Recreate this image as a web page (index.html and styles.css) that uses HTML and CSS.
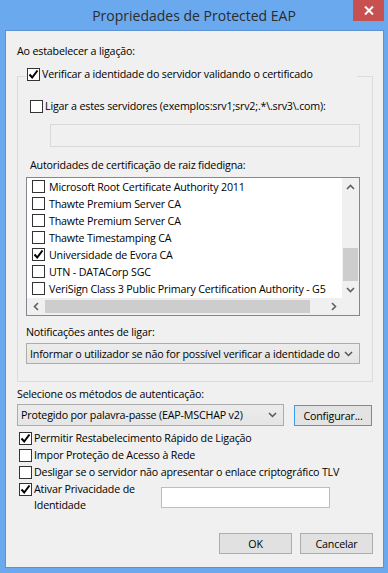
FILE: index.html
```html
<!DOCTYPE html>
<html lang="pt">
<head>
    <meta charset="UTF-8">
    <meta name="viewport" content="width=device-width, initial-scale=1.0">
    <title>Propriedades de Protected EAP</title>
    <link rel="stylesheet" href="styles.css">
</head>
<body>
    <div class="window">
        <div class="titlebar">
            <span class="title">Propriedades de Protected EAP</span>
            <button class="close" type="button">
                <svg width="10" height="9" viewBox="0 0 10 9"><path d="M1 0.5 L9 8.5 M9 0.5 L1 8.5" stroke="#fff" stroke-width="2"/></svg>
            </button>
        </div>

        <div class="client">
            <div class="caption">Ao estabelecer a ligação:</div>

            <fieldset class="group">
                <legend class="legend">
                    <span class="check">
                        <span class="box"><svg width="11" height="11" viewBox="0 0 11 11"><path d="M1.5 5.5 L4.2 8.5 L9.5 1.5" fill="none" stroke="#000" stroke-width="2"/></svg></span>
                        Verificar a identidade do servidor validando o certificado
                    </span>
                </legend>

                <div class="check servers"><span class="box"></span>Ligar a estes servidores (exemplos:srv1;srv2;.*\.srv3\.com):</div>
                <div class="textbox disabled servers-input"></div>

                <div class="caption ca-label">Autoridades de certificação de raiz fidedigna:</div>
                <div class="listview">
                    <div class="list-main">
                        <ul class="items">
                            <li><span class="box"></span>Microsoft Root Certificate Authority 2011</li>
                            <li><span class="box"></span>Thawte Premium Server CA</li>
                            <li><span class="box"></span>Thawte Premium Server CA</li>
                            <li><span class="box"></span>Thawte Timestamping CA</li>
                            <li><span class="box"><svg width="11" height="11" viewBox="0 0 11 11"><path d="M1.5 5.5 L4.2 8.5 L9.5 1.5" fill="none" stroke="#000" stroke-width="2"/></svg></span>Universidade de Evora CA</li>
                            <li><span class="box"></span>UTN - DATACorp SGC</li>
                            <li><span class="box"></span>VeriSign Class 3 Public Primary Certification Authority - G5</li>
                        </ul>
                        <div class="hscroll">
                            <span class="arrow"><svg width="6" height="9" viewBox="0 0 6 9"><path d="M5 1 L1.5 4.5 L5 8" fill="none" stroke="#606060" stroke-width="1.6"/></svg></span>
                            <span class="htrack"><span class="hthumb"></span></span>
                            <span class="arrow"><svg width="6" height="9" viewBox="0 0 6 9"><path d="M1 1 L4.5 4.5 L1 8" fill="none" stroke="#606060" stroke-width="1.6"/></svg></span>
                        </div>
                    </div>
                    <div class="vscroll">
                        <span class="arrow"><svg width="9" height="6" viewBox="0 0 9 6"><path d="M1 5 L4.5 1.5 L8 5" fill="none" stroke="#606060" stroke-width="1.6"/></svg></span>
                        <span class="vtrack"><span class="vthumb"></span></span>
                        <span class="arrow"><svg width="9" height="6" viewBox="0 0 9 6"><path d="M1 1 L4.5 4.5 L8 1" fill="none" stroke="#606060" stroke-width="1.6"/></svg></span>
                        <span class="corner"></span>
                    </div>
                </div>

                <div class="caption notify-label">Notificações antes de ligar:</div>
                <div class="combo notify-combo">
                    <span class="combo-text">Informar o utilizador se não for possível verificar a identidade do</span>
                    <svg width="9" height="6" viewBox="0 0 9 6"><path d="M1 1 L4.5 4.5 L8 1" fill="none" stroke="#555" stroke-width="1.5"/></svg>
                </div>
            </fieldset>

            <div class="caption auth-label">Selecione os métodos de autenticação:</div>
            <div class="auth-row">
                <div class="combo auth-combo">
                    <span class="combo-text">Protegido por palavra-passe (EAP-MSCHAP v2)</span>
                    <svg width="9" height="6" viewBox="0 0 9 6"><path d="M1 1 L4.5 4.5 L8 1" fill="none" stroke="#555" stroke-width="1.5"/></svg>
                </div>
                <button class="btn default" type="button">Configurar...</button>
            </div>

            <div class="options">
                <div class="check opt"><span class="box"><svg width="11" height="11" viewBox="0 0 11 11"><path d="M1.5 5.5 L4.2 8.5 L9.5 1.5" fill="none" stroke="#000" stroke-width="2"/></svg></span>Permitir Restabelecimento Rápido de Ligação</div>
                <div class="check opt"><span class="box"></span>Impor Proteção de Acesso à Rede</div>
                <div class="check opt"><span class="box"></span>Desligar se o servidor não apresentar o enlace criptográfico TLV</div>
                <div class="privacy-row">
                    <div class="check opt top">
                        <span class="box"><svg width="11" height="11" viewBox="0 0 11 11"><path d="M1.5 5.5 L4.2 8.5 L9.5 1.5" fill="none" stroke="#000" stroke-width="2"/></svg></span>
                        <span class="wrap-label">Ativar Privacidade de Identidade</span>
                    </div>
                    <div class="textbox privacy-input"></div>
                </div>
            </div>

            <div class="buttons">
                <button class="btn" type="button">OK</button>
                <button class="btn" type="button">Cancelar</button>
            </div>
        </div>
    </div>
</body>
</html>
```

FILE: styles.css
```css
body {
    margin: 0;
    background-color: #6ba9ef;
    font-family: "Open Sans", "Noto Sans", sans-serif;
    font-size: 10.7px;
    letter-spacing: -0.18px;
    color: #000;
}
.window {
    width: 388px;
    height: 573px;
    display: flex;
    flex-direction: column;
}
.titlebar {
    height: 30px;
    display: grid;
    grid-template-columns: 1fr auto 1fr;
}
.title {
    grid-column: 2;
    align-self: center;
    font-size: 14px;
    letter-spacing: 0;
    color: #2b2b2b;
}
.close {
    grid-column: 3;
    justify-self: end;
    align-self: start;
    width: 31px;
    height: 21px;
    margin-right: 4px;
    padding: 0;
    border: 0;
    background-color: #c75050;
    display: flex;
    align-items: center;
    justify-content: center;
}
.client {
    flex: 1;
    margin: 0 4px 5px 5px;
    border: 1px solid #5c92d2;
    background-color: #f0f0f0;
    display: flex;
    flex-direction: column;
    padding: 12px 10px 13px 11px;
}
.caption {
    line-height: 17px;
    white-space: nowrap;
}

/* checkboxes */
.check {
    display: flex;
    align-items: center;
    line-height: 17px;
    white-space: nowrap;
}
.box {
    width: 13px;
    height: 13px;
    box-sizing: border-box;
    border: 1px solid #333;
    background: #fff;
    margin-right: 2px;
    flex: none;
    display: flex;
    align-items: center;
    justify-content: center;
}

/* group box */
.group {
    margin: 6px 0 0;
    padding: 11px 12px 17px 8px;
    border: 1px solid #dcdcdc;
    min-width: 0;
}
.legend {
    width: 331px;
    box-sizing: border-box;
    padding: 0 2px 4px 1px;
}
.servers {
    margin-left: 4px;
}
.textbox {
    box-sizing: border-box;
    border: 1px solid #bdbdbd;
    background: #fff;
}
.textbox.disabled {
    border-color: #d9d9d9;
    background: #f0f0f0;
}
.servers-input {
    margin: 9px 0 0 24px;
    width: 310px;
    height: 23px;
}
.ca-label {
    margin: 10px 0 0 4px;
}

/* list view */
.listview {
    margin-top: 3px;
    height: 139px;
    box-sizing: border-box;
    border: 1px solid #828790;
    background: #fff;
    display: flex;
}
.list-main {
    flex: 1;
    min-width: 0;
    display: flex;
    flex-direction: column;
}
.items {
    flex: 1;
    list-style: none;
    margin: 0;
    padding: 0;
    overflow: hidden;
}
.items li {
    height: 17px;
    display: flex;
    align-items: center;
    padding-left: 5px;
    white-space: nowrap;
}
.items .box {
    margin-right: 4px;
}
.arrow {
    width: 17px;
    height: 17px;
    flex: none;
    display: flex;
    align-items: center;
    justify-content: center;
}
.hscroll {
    height: 17px;
    display: flex;
    background: #f0f0f0;
}
.htrack {
    flex: 1;
    display: flex;
}
.hthumb {
    width: 265px;
    margin: 2px 0 2px 1px;
    background: #cdcdcd;
}
.vscroll {
    width: 17px;
    display: flex;
    flex-direction: column;
    background: #f0f0f0;
}
.vtrack {
    flex: 1;
    display: flex;
    flex-direction: column;
    justify-content: flex-end;
}
.vthumb {
    height: 33px;
    margin: 0 1px;
    background: #cdcdcd;
}
.corner {
    height: 17px;
}

/* combo boxes */
.notify-label {
    margin-top: 8px;
}
.combo {
    box-sizing: border-box;
    border: 1px solid #acacac;
    background: linear-gradient(#ececec, #e5e5e5);
    display: flex;
    align-items: center;
    padding: 0 6px 0 3px;
}
.combo-text {
    flex: 1;
    min-width: 0;
    white-space: nowrap;
    margin-right: 8px;
}
.notify-combo {
    margin-top: 2px;
    height: 21px;
}
.auth-label {
    margin-top: 4px;
}
.auth-row {
    display: flex;
    align-items: flex-end;
    margin-top: 1px;
}
.auth-combo {
    width: 267px;
    height: 22px;
}

/* buttons */
.btn {
    font-family: inherit;
    font-size: 10.7px;
    letter-spacing: -0.18px;
    color: #000;
    height: 21px;
    padding: 0;
    border: 1px solid #adadad;
    background: #e1e1e1;
}
.btn.default {
    width: 78px;
    margin-left: 10px;
    border-color: #3d9ae8;
    background: #e3e3e3;
}

/* options */
.options {
    margin-top: 4px;
}
.opt {
    margin-left: 2px;
}
.privacy-row {
    display: flex;
    align-items: center;
}
.check.top {
    align-items: flex-start;
}
.check.top .box {
    margin-top: 2px;
}
.wrap-label {
    width: 124px;
    white-space: normal;
    line-height: 16px;
}
.privacy-input {
    width: 169px;
    height: 21px;
    margin-left: 3px;
}

.buttons {
    margin-top: auto;
    display: flex;
    justify-content: flex-end;
    gap: 8px;
}
.buttons .btn {
    width: 73px;
}
```
